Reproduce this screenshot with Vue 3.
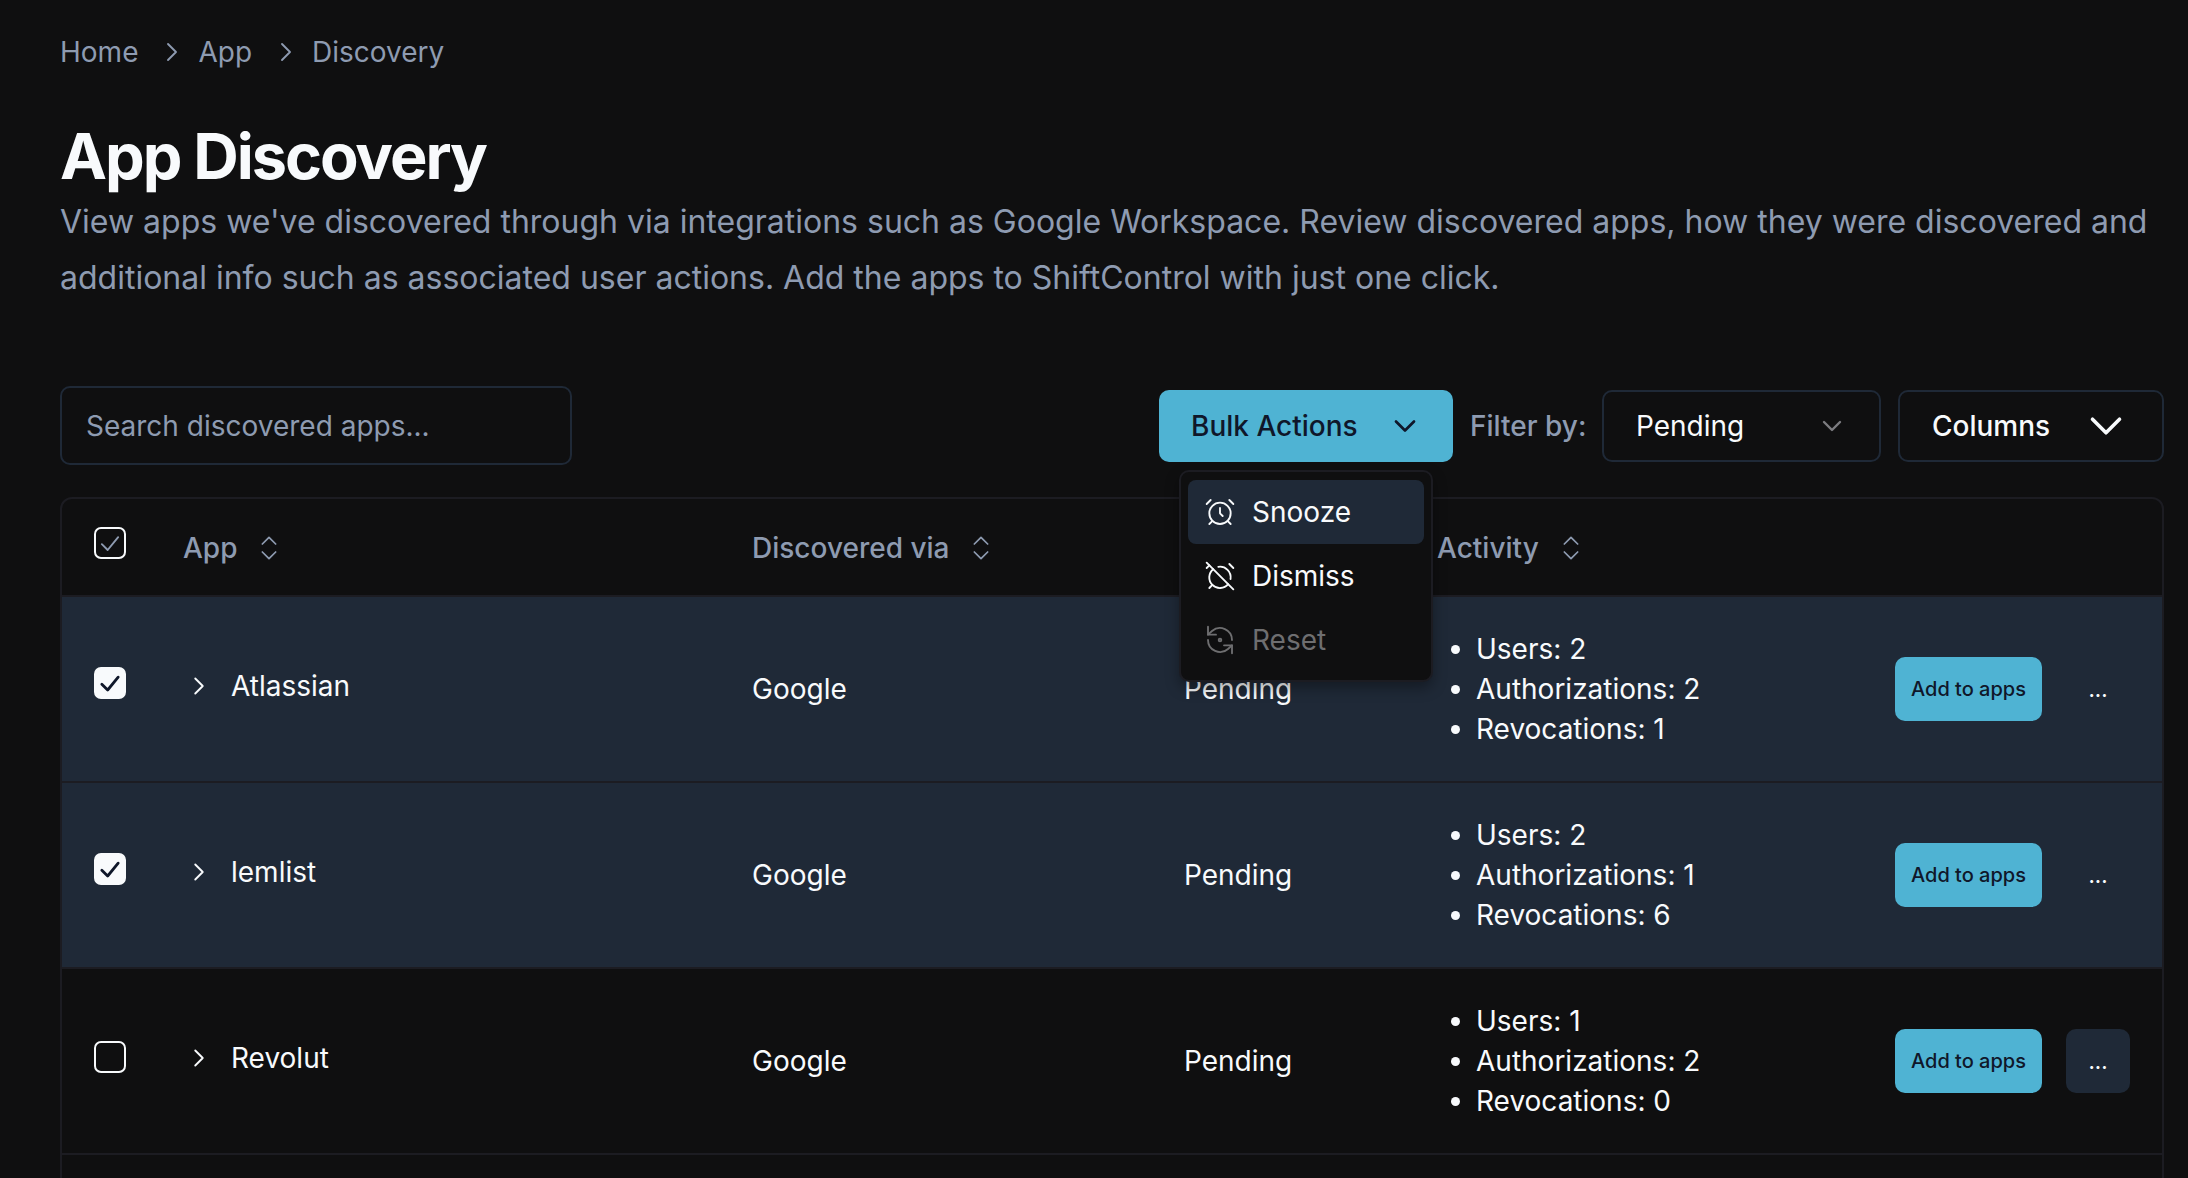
<template>
  <div class="page">
    <nav class="crumbs">
      <span>Home</span>
      <svg class="crumb-sep" viewBox="0 0 24 24"><path d="m9 18 6-6-6-6" /></svg>
      <span>App</span>
      <svg class="crumb-sep" viewBox="0 0 24 24"><path d="m9 18 6-6-6-6" /></svg>
      <span>Discovery</span>
    </nav>

    <h1 class="title">App Discovery</h1>
    <p class="intro">
      View apps we've discovered through via integrations such as Google Workspace. Review discovered apps, how they were discovered and additional info such as associated user actions. Add the apps to ShiftControl with just one click.
    </p>

    <div class="toolbar">
      <input class="search" type="text" placeholder="Search discovered apps..." />
      <div class="controls">
        <div class="bulk-wrap">
          <button class="bulk">
            Bulk Actions
            <svg class="chev-sm" viewBox="0 0 24 24"><path d="m6 9 6 6 6-6" /></svg>
          </button>
          <div class="menu">
            <div class="menu-item active">
              <svg class="menu-icon" viewBox="0 0 24 24">
                <circle cx="12" cy="13" r="8" />
                <path d="M12 9v4l2 2" />
                <path d="M5 3 2 6" />
                <path d="m22 6-3-3" />
                <path d="M6.38 18.7 4 21" />
                <path d="M17.64 18.67 20 21" />
              </svg>
              Snooze
            </div>
            <div class="menu-item">
              <svg class="menu-icon" viewBox="0 0 24 24">
                <path d="M6.87 6.87a8 8 0 1 0 11.26 11.26" />
                <path d="M19.9 14.25a8 8 0 0 0-9.15-9.15" />
                <path d="m22 6-3-3" />
                <path d="M6.26 18.67 4 21" />
                <path d="m2 2 20 20" />
                <path d="M4 4 2 6" />
              </svg>
              Dismiss
            </div>
            <div class="menu-item disabled">
              <svg class="menu-icon" viewBox="0 0 24 24">
                <path d="M3 2v6h6" />
                <path d="M21 12A9 9 0 0 0 6 5.3L3 8" />
                <path d="M21 22v-6h-6" />
                <path d="M3 12a9 9 0 0 0 15 6.7l3-2.7" />
                <circle cx="12" cy="12" r="1" />
              </svg>
              Reset
            </div>
          </div>
        </div>
        <span class="filter-label">Filter by:</span>
        <button class="select">
          Pending
          <svg class="chev-sm muted" viewBox="0 0 24 24"><path d="m6 9 6 6 6-6" /></svg>
        </button>
        <button class="select columns">
          Columns
          <svg class="chev-lg" viewBox="0 0 24 24"><path d="m6 9 6 6 6-6" /></svg>
        </button>
      </div>
    </div>

    <div class="table-wrap">
      <table>
        <colgroup>
          <col class="col-check" />
          <col class="col-app" />
          <col class="col-via" />
          <col class="col-status" />
          <col class="col-activity" />
          <col class="col-actions" />
        </colgroup>
        <thead>
          <tr>
            <th class="check-cell">
              <span class="box all">
                <svg viewBox="0 0 24 24"><path d="M5 13l5 5L19 7" /></svg>
              </span>
            </th>
            <th v-for="col in columns" :key="col" class="sortable">
              <span class="th-inner">
                {{ col }}
                <svg class="sort" viewBox="0 0 24 24"><path d="m7 15 5 5 5-5" /><path d="m7 9 5-5 5 5" /></svg>
              </span>
            </th>
            <th></th>
          </tr>
        </thead>
        <tbody>
          <tr v-for="app in apps" :key="app.name" :class="{ selected: app.selected }">
            <td class="check-cell">
              <span class="box" :class="{ checked: app.selected }">
                <svg v-if="app.selected" viewBox="0 0 24 24"><path d="M5 13l5 5L19 7" /></svg>
              </span>
            </td>
            <td>
              <span class="app-name">
                <svg class="expand" viewBox="0 0 24 24"><path d="m9 18 6-6-6-6" /></svg>
                {{ app.name }}
              </span>
            </td>
            <td>Google</td>
            <td>Pending</td>
            <td>
              <ul class="activity">
                <li>Users: {{ app.users }}</li>
                <li>Authorizations: {{ app.authorizations }}</li>
                <li>Revocations: {{ app.revocations }}</li>
              </ul>
            </td>
            <td>
              <div class="actions">
                <button class="add">Add to apps</button>
                <button class="more" :class="{ hover: app.hover }">...</button>
              </div>
            </td>
          </tr>
        </tbody>
      </table>
    </div>
  </div>
</template>

<script setup>
const columns = ['App', 'Discovered via', 'Status', 'Activity'];

const apps = [
  { name: 'Atlassian', users: 2, authorizations: 2, revocations: 1, selected: true },
  { name: 'lemlist', users: 2, authorizations: 1, revocations: 6, selected: true },
  { name: 'Revolut', users: 1, authorizations: 2, revocations: 0, hover: true }
];
</script>

<style>
html,
body {
  margin: 0;
  background: #0f0f10;
}
</style>

<style scoped>
.page {
  box-sizing: border-box;
  height: 1178px;
  overflow: hidden;
  padding: 32px 24px 0 60px;
  background: #0f0f10;
  color: #f8fafc;
  font-family: Inter, "Liberation Sans", sans-serif;
  font-size: 28px;
}

svg {
  fill: none;
  stroke: currentColor;
  stroke-linecap: round;
  stroke-linejoin: round;
}

.crumbs {
  display: flex;
  align-items: center;
  gap: 16px;
  height: 40px;
  color: #8e9bb1;
}

.crumb-sep {
  width: 32px;
  height: 32px;
  margin: 0 -6px 0 2px;
  stroke-width: 1.4;
}

.title {
  margin: 49px 0 0;
  font-size: 63px;
  line-height: 70px;
  font-weight: 700;
  letter-spacing: -2.05px;
}

.intro {
  margin: 3px 0 0;
  color: #8e9bb1;
  font-size: 32px;
  line-height: 56px;
}

.toolbar {
  display: flex;
  align-items: center;
  justify-content: space-between;
  margin-top: 80px;
}

.search {
  box-sizing: border-box;
  width: 512px;
  height: 79px;
  padding: 0 24px;
  background: transparent;
  border: 2px solid #1f2937;
  border-radius: 10px;
  color: #f8fafc;
  font: inherit;
  outline: none;
}

.search::placeholder {
  color: #8e9bb1;
  opacity: 1;
}

.controls {
  display: flex;
  align-items: center;
  gap: 17px;
}

.bulk-wrap {
  position: relative;
}

button {
  font: inherit;
  cursor: pointer;
}

.bulk {
  display: flex;
  align-items: center;
  justify-content: space-between;
  box-sizing: border-box;
  width: 294px;
  height: 72px;
  padding: 0 30px 0 32px;
  background: #4fb3d3;
  border: 0;
  border-radius: 10px;
  color: #0f172a;
  font-weight: 500;
}

.chev-sm {
  width: 36px;
  height: 36px;
  stroke-width: 1.8;
}

.chev-sm.muted {
  width: 32px;
  height: 32px;
  margin-right: 2px;
  color: #7c7c80;
}

.chev-lg {
  width: 54px;
  height: 54px;
  stroke-width: 1.6;
}

.filter-label {
  color: #8e9bb1;
  font-weight: 500;
  width: 115px;
  white-space: nowrap;
}

.select {
  display: flex;
  align-items: center;
  justify-content: space-between;
  box-sizing: border-box;
  width: 279px;
  height: 72px;
  padding: 0 29px 0 32px;
  background: transparent;
  border: 2px solid #1f2937;
  border-radius: 10px;
  color: #f8fafc;
}

.select.columns {
  width: 266px;
  padding: 0 29px 0 32px;
  font-weight: 500;
}

.menu {
  position: absolute;
  z-index: 5;
  top: 80px;
  left: 20px;
  box-sizing: border-box;
  width: 254px;
  height: 212px;
  padding: 8px 7px;
  background: #0f0f10;
  border: 2px solid #1c1c22;
  border-radius: 10px;
  box-shadow: 0 6px 14px rgba(0, 0, 0, 0.35);
}

.menu-item {
  display: flex;
  align-items: center;
  gap: 16px;
  height: 64px;
  padding-left: 16px;
  border-radius: 8px;
}

.menu-item.active {
  background: #1f2937;
}

.menu-item.disabled {
  color: #6e6e70;
}

.menu-icon {
  width: 32px;
  height: 32px;
  stroke-width: 1.4;
  flex-shrink: 0;
}

.table-wrap {
  margin-top: 32px;
  padding-bottom: 200px;
  border: 2px solid #1c1c22;
  border-radius: 12px;
}

table {
  width: 100%;
  table-layout: fixed;
  border-collapse: collapse;
}

.col-check { width: 121px; }
.col-app { width: 569px; }
.col-via { width: 432px; }
.col-status { width: 253px; }
.col-activity { width: 458px; }

th,
td {
  padding: 0;
  text-align: left;
}

thead tr {
  height: 97px;
  border-bottom: 2px solid #1c1c22;
}

th {
  color: #8e9bb1;
  font-weight: 500;
}

th.sortable {
  padding-top: 2px;
}

tbody tr {
  height: 186px;
  border-bottom: 2px solid #1c1c22;
}

tbody tr.selected {
  background: #1f2937;
}

.th-inner {
  display: inline-flex;
  align-items: center;
  gap: 16px;
}

.sort {
  width: 32px;
  height: 32px;
  stroke-width: 1.3;
}

.check-cell {
  padding-left: 32px;
}

.box {
  display: block;
  box-sizing: border-box;
  width: 32px;
  height: 32px;
  margin-top: -8px;
  border: 2px solid #f8fafc;
  border-radius: 7px;
}

.box.checked {
  margin-top: -12px;
  background: #f8fafc;
  color: #0f172a;
}

.box svg {
  display: block;
  width: 100%;
  height: 100%;
  stroke-width: 2.4;
}

.box.all svg {
  color: #8e9bb1;
  stroke-width: 1.6;
}

.app-name {
  display: flex;
  align-items: center;
  gap: 17px;
  margin-top: -7px;
  margin-left: 1px;
}

.expand {
  width: 30px;
  height: 30px;
  stroke-width: 1.5;
}

.activity {
  margin: 0;
  padding: 0 0 0 39px;
  line-height: 40.25px;
}

.actions {
  display: flex;
  align-items: center;
  gap: 24px;
}

.add {
  width: 147px;
  height: 64px;
  padding: 0;
  background: #4fb3d3;
  border: 0;
  border-radius: 10px;
  color: #0f172a;
  font-size: 20px;
  font-weight: 500;
}

.more {
  width: 64px;
  height: 64px;
  padding: 0;
  background: transparent;
  border: 0;
  border-radius: 10px;
  color: #f8fafc;
  font-size: 21px;
  font-weight: 500;
}

.more.hover {
  background: #1f2937;
}
</style>
